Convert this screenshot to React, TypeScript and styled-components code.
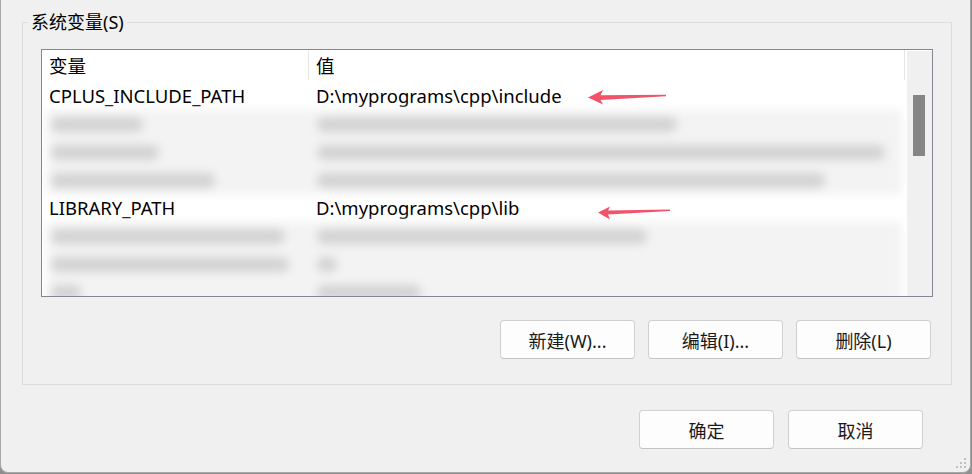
import React from "react";
import styled, { createGlobalStyle } from "styled-components";

const Global = createGlobalStyle`
  html, body { margin: 0; padding: 0; }
  body {
    width: 972px;
    height: 474px;
    overflow: hidden;
    background: #8f8f8f;
    font-family: "Noto Sans", "Noto Sans CJK SC", sans-serif;
    color: #000;
  }
`;

const Dialog = styled.div`
  position: relative;
  box-sizing: border-box;
  width: 971px;
  height: 473px;
  background: #f0f0f0;
  border: 1px solid #a7a7a7;
  border-top: none;
  border-radius: 0 0 8px 8px;
  padding: 0 18px 0 21px;
  display: flex;
  flex-direction: column;
`;

const GroupBox = styled.fieldset`
  margin: 12px 0 0 0;
  padding: 0;
  border: 1px solid #dcdcdc;
  min-width: 0;
`;

const Legend = styled.legend`
  margin-left: 5px;
  padding: 0 3px;
  font-size: 18px;
  line-height: 20px;
`;

const GroupInner = styled.div`
  padding: 17px 18px 25px 18px;
  display: flex;
  flex-direction: column;
`;

const ListBox = styled.div`
  position: relative;
  box-sizing: border-box;
  height: 248px;
  border: 1px solid #828790;
  background: #fff;
  display: flex;
  overflow: hidden;
`;

const ListContent = styled.div`
  flex: 1;
  display: flex;
  flex-direction: column;
  overflow: hidden;
`;

const HeaderRow = styled.div`
  display: grid;
  grid-template-columns: 267px 596px;
  height: 32px;
  flex-shrink: 0;
`;

const HeaderCell = styled.div`
  box-sizing: border-box;
  padding-left: 7px;
  border-right: 1px solid #e5e5e5;
  font-size: 18.5px;
  line-height: 32px;
  height: 30px;
  overflow: hidden;
`;

const Row = styled.div`
  display: grid;
  grid-template-columns: 267px 596px;
  height: 28px;
  flex-shrink: 0;
`;

const Cell = styled.div`
  padding-left: 7px;
  font-size: 18.5px;
  line-height: 28px;
  white-space: nowrap;
  overflow: hidden;
`;

const BlurBand = styled.div<{ $rows: number }>`
  height: ${(p) => p.$rows * 28}px;
  flex-shrink: 0;
  margin: 0 4px 0 5px;
  background: #f3f3f3;
  filter: blur(5px);
  display: flex;
  flex-direction: column;
`;

const BlurRow = styled.div`
  display: grid;
  grid-template-columns: 266px 1fr;
  height: 28px;
  align-items: center;
`;

const BlurBar = styled.div`
  height: 15px;
  margin-left: 4px;
  background: #d3d3d3;
  border-radius: 7px;
`;

const Scrollbar = styled.div`
  width: 26px;
  flex-shrink: 0;
  margin-top: 1px;
  border-left: 1px solid #fff;
  box-sizing: border-box;
  background: #f0f0f0;
  display: flex;
  justify-content: flex-start;
  padding-left: 6px;
`;

const Thumb = styled.div`
  width: 12px;
  height: 61px;
  background: #858585;
`;

const ButtonRow = styled.div<{ $gap: number }>`
  display: flex;
  justify-content: flex-end;
  gap: ${(p) => p.$gap}px;
`;

const Button = styled.button`
  box-sizing: border-box;
  width: 135px;
  height: 39px;
  padding: 0;
  background: #fdfdfd;
  border: 1px solid #d0d0d0;
  border-bottom-color: #c4c4c4;
  border-radius: 4px;
  font-family: "Noto Sans", "Noto Sans CJK SC", sans-serif;
  font-size: 18px;
  color: #1a1a1a;
`;

const ListButtons = styled(ButtonRow)`
  margin-top: 23px;
  margin-right: 2px;
`;

const DialogButtons = styled(ButtonRow)`
  margin-top: 25px;
  margin-right: 29px;
`;

const Arrow = styled.svg`
  position: absolute;
  left: 0;
  top: 0;
  pointer-events: none;
`;

const Grip = styled.svg`
  position: absolute;
  right: 2px;
  bottom: 2px;
`;

type BlurData = { name: number; value: number };

const upper: BlurData[] = [
  { name: 92, value: 360 },
  { name: 108, value: 568 },
  { name: 164, value: 508 },
];
const lower: BlurData[] = [
  { name: 234, value: 330 },
  { name: 238, value: 20 },
  { name: 30, value: 104 },
];

function Blurred({ rows }: { rows: BlurData[] }) {
  return (
    <BlurBand $rows={rows.length}>
      {rows.map((r, i) => (
        <BlurRow key={i}>
          <BlurBar style={{ width: r.name }} />
          <BlurBar style={{ width: r.value }} />
        </BlurRow>
      ))}
    </BlurBand>
  );
}

export default function App() {
  return (
    <>
      <Global />
      <Dialog>
        <GroupBox>
          <Legend>系统变量(S)</Legend>
          <GroupInner>
            <ListBox>
              <ListContent>
                <HeaderRow>
                  <HeaderCell>变量</HeaderCell>
                  <HeaderCell>值</HeaderCell>
                </HeaderRow>
                <Row>
                  <Cell>CPLUS_INCLUDE_PATH</Cell>
                  <Cell>D:\myprograms\cpp\include</Cell>
                </Row>
                <Blurred rows={upper} />
                <Row>
                  <Cell>LIBRARY_PATH</Cell>
                  <Cell>D:\myprograms\cpp\lib</Cell>
                </Row>
                <Blurred rows={lower} />
              </ListContent>
              <Scrollbar>
                <Thumb style={{ marginTop: 44 }} />
              </Scrollbar>
            </ListBox>
            <ListButtons $gap={13}>
              <Button>新建(W)...</Button>
              <Button>编辑(I)...</Button>
              <Button>删除(L)</Button>
            </ListButtons>
          </GroupInner>
        </GroupBox>
        <DialogButtons $gap={14}>
          <Button>确定</Button>
          <Button>取消</Button>
        </DialogButtons>
        <Arrow width="972" height="474" viewBox="0 0 972 474">
          <polygon
            fill="#f2536b"
            points="587,97.5 602,90 599.5,95.2 665,94.8 665,96.2 599.5,100 602,104.5"
          />
          <polygon
            fill="#f2536b"
            points="597,212.5 609,206.5 607,210.6 669,209.6 669,211 607,214.6 609,219.5"
          />
        </Arrow>
        <Grip width="12" height="12" viewBox="0 0 12 12">
          <g fill="#c2c2c2">
            <rect x="8" y="0" width="2" height="2" />
            <rect x="4" y="4" width="2" height="2" />
            <rect x="8" y="4" width="2" height="2" />
            <rect x="0" y="8" width="2" height="2" />
            <rect x="4" y="8" width="2" height="2" />
            <rect x="8" y="8" width="2" height="2" />
          </g>
        </Grip>
      </Dialog>
    </>
  );
}
